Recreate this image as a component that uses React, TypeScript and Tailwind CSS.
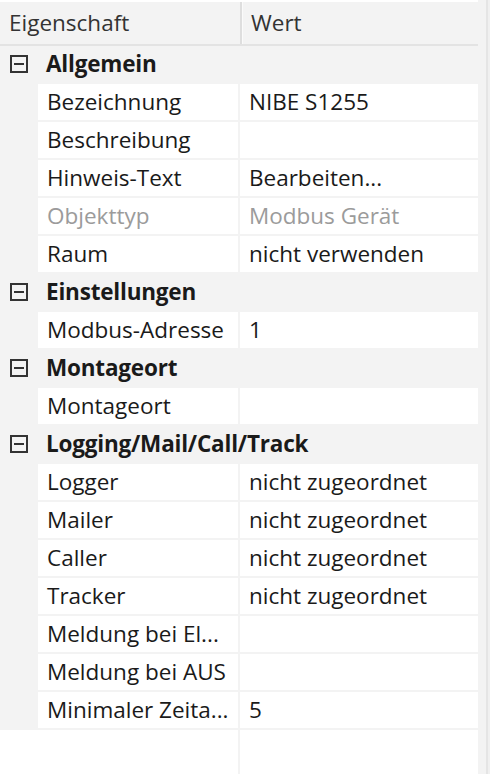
import React from "react";

type Row =
  | { kind: "group"; label: string }
  | { kind: "prop"; label: string; value?: string; disabled?: boolean };

const rows: Row[] = [
  { kind: "group", label: "Allgemein" },
  { kind: "prop", label: "Bezeichnung", value: "NIBE S1255" },
  { kind: "prop", label: "Beschreibung", value: "" },
  { kind: "prop", label: "Hinweis-Text", value: "Bearbeiten..." },
  { kind: "prop", label: "Objekttyp", value: "Modbus Gerät", disabled: true },
  { kind: "prop", label: "Raum", value: "nicht verwenden" },
  { kind: "group", label: "Einstellungen" },
  { kind: "prop", label: "Modbus-Adresse", value: "1" },
  { kind: "group", label: "Montageort" },
  { kind: "prop", label: "Montageort", value: "" },
  { kind: "group", label: "Logging/Mail/Call/Track" },
  { kind: "prop", label: "Logger", value: "nicht zugeordnet" },
  { kind: "prop", label: "Mailer", value: "nicht zugeordnet" },
  { kind: "prop", label: "Caller", value: "nicht zugeordnet" },
  { kind: "prop", label: "Tracker", value: "nicht zugeordnet" },
  { kind: "prop", label: "Meldung bei El...", value: "" },
  { kind: "prop", label: "Meldung bei AUS", value: "" },
  { kind: "prop", label: "Minimaler Zeita...", value: "5" },
];

function MinusBox() {
  return (
    <div className="w-[18px] h-[18px] border-2 border-[#333333] flex items-center justify-center shrink-0">
      <div className="w-[10px] h-[2px] bg-[#333333]" />
    </div>
  );
}

export default function App() {
  return (
    <div
      className="flex w-[490px] h-[774px] bg-white overflow-hidden text-[22.5px] text-[#1a1a1a]"
      style={{ fontFamily: '"Open Sans", "Noto Sans", sans-serif' }}
    >
      <div className="w-[478px] flex flex-col">
        <div className="h-[2px] bg-white" />
        <div className="h-[44px] flex bg-[#f3f3f3] border-b-2 border-[#e3e3e3] text-[#333333]">
          <div className="w-[240px] pl-[9px] flex items-center whitespace-nowrap">Eigenschaft</div>
          <div className="w-[2px] bg-[#dedede]" />
          <div className="w-px bg-[#fafafa]" />
          <div className="flex-1 pl-[8px] flex items-center">Wert</div>
        </div>
        <div className="flex flex-col gap-[2px] pb-[2px] bg-[#f3f3f3]">
          {rows.map((r, i) =>
            r.kind === "group" ? (
              <div key={i} className="h-[36px] flex items-center bg-[#f3f3f3]">
                <div className="ml-[10px] mr-[18px]">
                  <MinusBox />
                </div>
                <span className="font-bold whitespace-nowrap tracking-[-0.2px]">{r.label}</span>
              </div>
            ) : (
              <div key={i} className={`h-[36px] flex ${r.disabled ? "text-[#9b9b9b]" : ""}`}>
                <div className="w-[38px] bg-[#f3f3f3]" />
                <div className="w-[200px] bg-white pl-[9px] flex items-center whitespace-nowrap overflow-hidden">
                  {r.label}
                </div>
                <div className="w-[2px]" />
                <div className="flex-1 bg-white pl-[9px] flex items-center whitespace-nowrap overflow-hidden">
                  {r.value}
                </div>
              </div>
            )
          )}
        </div>
        <div className="flex-1 flex">
          <div className="w-[238px] bg-white" />
          <div className="w-[2px] bg-[#f3f3f3]" />
          <div className="flex-1 bg-white" />
        </div>
      </div>
      <div className="w-[8px] bg-[#f3f3f3]" />
      <div className="w-[2px] bg-[#e5e5e5]" />
      <div className="w-[2px] bg-[#f0f0f0]" />
    </div>
  );
}
